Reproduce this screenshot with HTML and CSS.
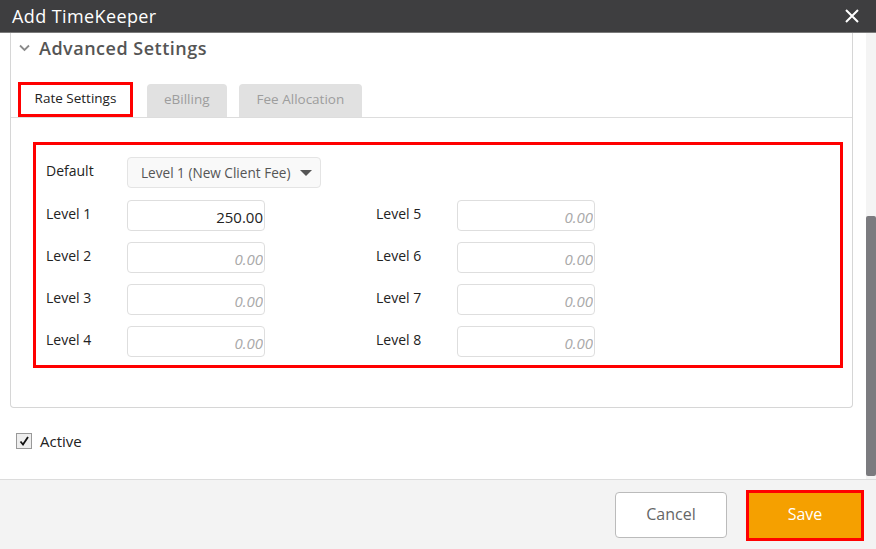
FILE: index.html
```html
<!DOCTYPE html>
<html lang="en">
<head>
  <meta charset="UTF-8" />
  <title>Add TimeKeeper</title>
  <link rel="stylesheet" href="styles.css">
</head>
<body>

  <div class="dialog">
    <div class="titlebar">
      <span class="title">Add TimeKeeper</span>
      <svg class="close" width="14" height="14" viewBox="0 0 14 14">
        <path d="M1 1 L13 13 M13 1 L1 13" stroke="#fff" stroke-width="2" fill="none"/>
      </svg>
    </div>

    <div class="body">
      <div class="content">
        <div class="panel">
          <div class="panel-header">
            <svg class="chevron" width="11" height="8" viewBox="0 0 11 8">
              <path d="M1 1.5 L5.5 6 L10 1.5" stroke="#8a8a8a" stroke-width="1.8" fill="none"/>
            </svg>
            <span>Advanced Settings</span>
          </div>

          <div class="tabs">
            <div class="tab active">Rate Settings</div>
            <div class="tab">eBilling</div>
            <div class="tab">Fee Allocation</div>
          </div>

          <div class="rates">
            <div class="row-default">
              <label>Default</label>
              <div class="select">
                <span>Level 1 (New Client Fee)</span>
                <i class="caret"></i>
              </div>
            </div>
            <div class="levels">
              <label>Level 1</label>
              <input class="amount" type="text" value="250.00" placeholder="0.00">
              <span></span>
              <label>Level 5</label>
              <input class="amount" type="text" placeholder="0.00">

              <label>Level 2</label>
              <input class="amount" type="text" placeholder="0.00">
              <span></span>
              <label>Level 6</label>
              <input class="amount" type="text" placeholder="0.00">

              <label>Level 3</label>
              <input class="amount" type="text" placeholder="0.00">
              <span></span>
              <label>Level 7</label>
              <input class="amount" type="text" placeholder="0.00">

              <label>Level 4</label>
              <input class="amount" type="text" placeholder="0.00">
              <span></span>
              <label>Level 8</label>
              <input class="amount" type="text" placeholder="0.00">
            </div>
          </div>
        </div>

        <div class="active-row">
          <span class="checkbox">
            <svg width="12" height="12" viewBox="0 0 12 12">
              <path d="M2.5 6.5 L5 9.5 L10 2" stroke="#111" stroke-width="1.8" fill="none"/>
            </svg>
          </span>
          <span>Active</span>
        </div>
      </div>

      <div class="scrollbar">
        <div class="thumb"></div>
      </div>
    </div>

    <div class="footer">
      <button class="btn cancel">Cancel</button>
      <button class="btn save">Save</button>
    </div>
  </div>

</body>
</html>
```

FILE: styles.css
```css
* {
  box-sizing: border-box;
}

body {
  margin: 0;
  font-family: "Open Sans", "Liberation Sans", sans-serif;
  background: #fff;
  color: #222;
}

.dialog {
  width: 876px;
  height: 549px;
  display: flex;
  flex-direction: column;
  overflow: hidden;
}

.titlebar {
  height: 33px;
  background: #3e3e40;
  border-bottom: 1px solid #7a7a7a;
  display: flex;
  align-items: center;
  justify-content: space-between;
  padding: 0 17px 0 12px;
}

.title {
  color: #fff;
  font-size: 18px;
  letter-spacing: 0.4px;
}

.body {
  height: 446px;
  display: flex;
}

.content {
  flex: 1;
  overflow: hidden;
}

.panel {
  margin: 0 13px 0 10px;
  border: 1px solid #d6d6d6;
  border-top: none;
  border-radius: 0 0 4px 4px;
  padding-bottom: 39px;
}

.panel-header {
  height: 30px;
  display: flex;
  align-items: center;
  padding-left: 8px;
  gap: 9px;
  font-size: 18px;
  letter-spacing: 0.5px;
  font-weight: 600;
  color: #555;
}

/* Tabs */
.tabs {
  margin-top: 19px;
  display: flex;
  align-items: flex-end;
  padding-left: 7px;
  border-bottom: 1px solid #ddd;
}

.tab {
  height: 33px;
  padding: 0 17px 4px;
  margin-right: 12px;
  background: #e1e1e1;
  color: #9d9d9d;
  font-size: 13.5px;
  border-radius: 4px 4px 0 0;
  display: flex;
  align-items: center;
}

.tab:nth-child(3) {
  padding: 0 18px 4px;
}

.tab.active {
  height: 35px;
  width: 115px;
  margin-right: 14px;
  justify-content: center;
  padding: 0 0 3px;
  background: #fff;
  color: #222;
  border: 3px solid #f00;
  border-radius: 0;
}

/* Rates */
.rates {
  margin: 24px 9px 0 22px;
  border: 3px solid #f00;
  padding: 12px 10px 8px 10px;
}

.row-default {
  display: flex;
  align-items: center;
  margin-bottom: 12px;
}

.row-default label {
  width: 81px;
}

label {
  font-size: 14px;
  color: #222;
  padding-bottom: 4px;
}

.select {
  width: 194px;
  height: 31px;
  background: #f9f9f9;
  border: 1px solid #e4e4e4;
  border-radius: 4px;
  display: flex;
  align-items: center;
  justify-content: space-between;
  padding: 0 8px 0 13px;
  font-size: 13.6px;
  color: #555;
}

.caret {
  width: 0;
  height: 0;
  border-left: 6px solid transparent;
  border-right: 6px solid transparent;
  border-top: 6px solid #555;
}

.levels {
  display: grid;
  grid-template-columns: 81px 138px 111px 81px 138px;
  grid-auto-rows: 31px;
  row-gap: 11px;
  align-items: center;
}

.amount {
  width: 138px;
  height: 31px;
  border: 1px solid #dedede;
  border-radius: 4px;
  background: #fff;
  text-align: right;
  padding: 3px 1px 0 0;
  font-family: inherit;
  font-size: 15px;
  color: #222;
  outline: none;
}

.amount::placeholder {
  color: #aaa;
  font-style: italic;
}

/* Active */
.active-row {
  margin: 23px 0 0 16px;
  display: flex;
  align-items: center;
  gap: 8px;
  font-size: 15px;
}

.checkbox {
  width: 16px;
  height: 16px;
  border: 1px solid #999;
  background: #eee;
  display: flex;
  align-items: center;
  justify-content: center;
}

/* Scrollbar */
.scrollbar {
  width: 10px;
  background: #f4f4f4;
  padding-top: 183px;
}

.thumb {
  height: 260px;
  background: #7b7b7f;
  border-radius: 2px;
}

/* Footer */
.footer {
  flex: 1;
  background: #f3f3f3;
  border-top: 1px solid #dcdcdc;
  display: flex;
  align-items: center;
  justify-content: flex-end;
  gap: 19px;
  padding: 0 12px 0 0;
}

.btn {
  font-family: inherit;
  font-size: 16px;
  border-radius: 4px;
  cursor: pointer;
}

.cancel {
  width: 112px;
  height: 46px;
  background: #fff;
  border: 1px solid #bbb;
  color: #666;
  padding-bottom: 3px;
}

.save {
  width: 118px;
  height: 51px;
  margin-top: 1px;
  background: #f5a000;
  border: 3px solid #f00;
  border-radius: 0;
  color: #fff;
  padding-bottom: 4px;
}
```
